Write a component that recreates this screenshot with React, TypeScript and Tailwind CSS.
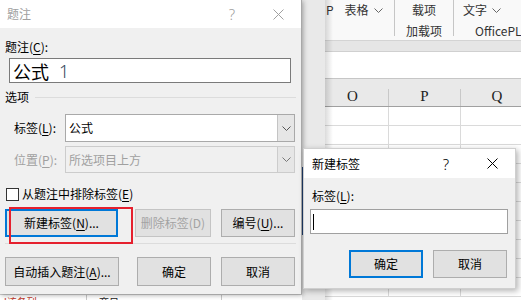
import React from "react";

const font = "font-['Noto_Sans_CJK_SC','Noto_Sans',sans-serif]";

function Chevron() {
  return (
    <svg width="9" height="5" viewBox="0 0 9 5">
      <path d="M0.5 0.5 L4.5 4.5 L8.5 0.5" fill="none" stroke="currentColor" strokeWidth="1" />
    </svg>
  );
}

function XIcon() {
  return (
    <svg width="11" height="11" viewBox="0 0 11 11">
      <path d="M0.5 0.5 L10.5 10.5 M10.5 0.5 L0.5 10.5" fill="none" stroke="currentColor" strokeWidth="1" />
    </svg>
  );
}

function Btn({
  className,
  children,
  focus,
  disabled,
}: {
  className: string;
  children: React.ReactNode;
  focus?: boolean;
  disabled?: boolean;
}) {
  const border = focus
    ? "border-2 border-[#0078d7]"
    : disabled
    ? "border border-[#c4c4c4]"
    : "border border-[#adadad]";
  const text = disabled ? "text-[#a3a3a3]" : "text-black";
  return (
    <div className={`${className} shrink-0 h-full bg-[#e1e1e1] ${border} ${text} flex items-center justify-center`}>
      <span>{children}</span>
    </div>
  );
}

function U({ children }: { children: React.ReactNode }) {
  return <span className="underline underline-offset-2">{children}</span>;
}

export default function App() {
  return (
    <div className={`relative w-[521px] h-[300px] overflow-hidden text-[12px] leading-[16px] ${font}`}>
      {/* Background: Excel window */}
      <div className="flex w-[521px] h-[300px]">
        <div className="w-[302px] shrink-0 bg-white flex flex-col justify-end">
          <div className="h-[6px] overflow-hidden flex border-t border-[#d0d0d0]">
            <div className="w-[87px] shrink-0 border-r border-[#c8c8c8] pl-[4px] pt-[1px] leading-[12px] text-[10px] text-[#c0392b]">l该各列m</div>
            <div className="w-[135px] shrink-0 border-r border-[#c8c8c8] pl-[12px] pt-[1px] leading-[12px] text-[10px] text-[#222]">商日</div>
            <div className="flex-1" />
          </div>
        </div>
        <div className="w-[23px] shrink-0 bg-[#e9e9e9] relative">
          <div className="absolute left-0 top-[167px] w-[2px] h-[68px] bg-[#24457a]" />
        </div>
        <div className="flex-1 min-w-0 overflow-hidden flex flex-col relative bg-white">
          {/* Ribbon */}
          <div className="h-[41px] shrink-0 bg-[#f9f9f9] border-b border-[#d4d4d4] flex text-[#333]">
            <div className="w-[69px] shrink-0 flex items-start pt-[2px]">
              <span className="pl-[1px]">P</span>
              <span className="ml-[11px]">表格</span>
              <span className="ml-[5px] mt-[6px] text-[#666]">
                <Chevron />
              </span>
            </div>
            <div className="w-px shrink-0 h-[36px] bg-[#c6c6c6]" />
            <div className="w-[58px] shrink-0 flex flex-col items-center pt-[2px]">
              <span>载项</span>
              <span className="mt-[5px]">加载项</span>
            </div>
            <div className="w-px shrink-0 h-[36px] bg-[#c6c6c6]" />
            <div className="flex-1 min-w-0 flex flex-col pt-[2px]">
              <div className="flex items-start pl-[9px]">
                <span>文字</span>
                <span className="ml-[5px] mt-[6px] text-[#666]">
                  <Chevron />
                </span>
              </div>
              <span className="mt-[5px] pl-[21px] whitespace-nowrap">OfficePLUS</span>
            </div>
          </div>
          <div className="h-[11px] shrink-0 bg-[#e6e6e6] border-b border-[#d0d0d0]" />
          <div className="h-[27px] shrink-0 bg-white border-b border-[#c6c6c6]" />
          {/* Column header */}
          <div className="h-[28px] shrink-0 bg-[#e9e9e9] border-b border-[#a0a0a0] flex font-['Liberation_Serif',serif] text-[15px] text-[#222]">
            <div className="w-[64px] shrink-0 flex items-end justify-center pr-[8px] pb-[2px] border-r border-[#c8c8c8] mt-[10px]">O</div>
            <div className="w-[72px] shrink-0 flex items-end justify-center pb-[2px] border-r border-[#c8c8c8] mt-[10px]">P</div>
            <div className="w-[72px] shrink-0 flex items-end justify-center pb-[2px] mt-[10px]">Q</div>
          </div>
          {/* Rows */}
          <div className="flex-1 flex flex-col">
            {[0, 1, 2, 3, 4, 5, 6, 7, 8, 9].map((r) => (
              <div key={r} className="h-[19px] shrink-0 flex border-b border-[#dadada]">
                <div className="w-[64px] shrink-0 border-r border-[#dadada]" />
                <div className="w-[72px] shrink-0 border-r border-[#dadada]" />
                <div className="w-[72px] shrink-0" />
              </div>
            ))}
          </div>
          <div className="absolute left-0 top-0 h-full w-[8px] bg-gradient-to-r from-[rgba(0,0,0,0.14)] to-transparent" />
        </div>
      </div>

      {/* Main dialog: 题注 */}
      <div className="absolute left-0 top-0 w-[302px] h-[294px] flex flex-col bg-[#f0f0f0] border-r border-[#a8a8a8] shadow-[1px_1px_5px_rgba(0,0,0,0.35)]">
        <div className="h-[28px] shrink-0 bg-white flex items-center">
          <span className="pl-[7px] text-[#a0a0a0]">题注</span>
          <div className="ml-auto flex h-full">
            <div className="w-[46px] flex items-center justify-center text-[#a0a0a0] text-[15px] font-['Noto_Sans',sans-serif] font-light">?</div>
            <div className="w-[46px] flex items-center justify-center text-[#a0a0a0]">
              <XIcon />
            </div>
          </div>
        </div>
        <div className="flex flex-col px-[5px] text-black">
          <div className="mt-[11px]">
            题注(<U>C</U>):
          </div>
          <div className="mt-[3px] ml-[4px] w-[282px] h-[25px] bg-white border border-[#7a7a7a] flex items-center pl-[3px] text-[18px] leading-[22px]">
            <span>公式</span>
            <span className="ml-[10px] text-[#34465c] font-['Noto_Sans',sans-serif] font-light">1</span>
          </div>
          <div className="mt-[6px] flex items-center h-[16px]">
            <span>选项</span>
            <div className="ml-[6px] flex-1 h-px bg-[#dcdcdc]" />
          </div>
          <div className="mt-[9px] flex items-center">
            <span className="w-[60px] shrink-0 pl-[9px]">
              标签(<U>L</U>):
            </span>
            <div className="w-[230px] h-[28px] bg-white border border-[#a9a9a9] flex">
              <span className="flex-1 flex items-center pl-[3px]">公式</span>
              <div className="w-[17px] bg-[#e6e6e6] border-l border-[#c4c4c4] flex items-center justify-center text-[#555]">
                <Chevron />
              </div>
            </div>
          </div>
          <div className="mt-[4px] flex items-center text-[#a0a0a0]">
            <span className="w-[60px] shrink-0 pl-[9px]">
              位置(<U>P</U>):
            </span>
            <div className="w-[230px] h-[27px] bg-[#f0f0f0] border border-[#cccccc] flex">
              <span className="flex-1 flex items-center pl-[3px]">所选项目上方</span>
              <div className="w-[17px] bg-[#e6e6e6] border-l border-[#cccccc] flex items-center justify-center text-[#777]">
                <Chevron />
              </div>
            </div>
          </div>
          <div className="mt-[13px] flex items-center">
            <div className="ml-[1px] w-[13px] h-[13px] bg-white border border-[#333]" />
            <span className="ml-[3px]">
              从题注中排除标签(<U>E</U>)
            </span>
          </div>
          <div className="mt-[7px] flex h-[28px]">
            <Btn className="w-[113px]" focus>
              新建标签(<U>N</U>)...
            </Btn>
            <Btn className="ml-[17px] w-[76px]" disabled>
              删除标签(D)
            </Btn>
            <Btn className="ml-[10px] w-[74px]">
              编号(<U>U</U>)...
            </Btn>
          </div>
          <div className="mt-[6px] h-px bg-[#dcdcdc]" />
          <div className="mt-[13px] flex h-[29px]">
            <Btn className="w-[114px]">
              自动插入题注(<U>A</U>)...
            </Btn>
            <Btn className="ml-[18px] w-[74px]">确定</Btn>
            <Btn className="ml-[10px] w-[74px]">取消</Btn>
          </div>
        </div>
        {/* red annotation */}
        <div className="absolute left-[9px] top-[207px] w-[124px] h-[37px] border-2 border-[#e5202e]" />
      </div>

      {/* Small dialog: 新建标签 */}
      <div className="absolute left-[303px] top-[148px] w-[213px] h-[141px] flex flex-col bg-[#f0f0f0] border border-[#cfcfcf] shadow-[2px_2px_6px_rgba(0,0,0,0.3)]">
        <div className="h-[29px] shrink-0 bg-white flex items-center">
          <span className="pl-[8px] text-black">新建标签</span>
          <div className="ml-auto flex h-full">
            <div className="w-[46px] flex items-center justify-center text-black text-[15px] font-['Noto_Sans',sans-serif] font-light">?</div>
            <div className="w-[46px] flex items-center justify-center text-black">
              <XIcon />
            </div>
          </div>
        </div>
        <div className="flex flex-col text-black">
          <div className="mt-[10px] pl-[8px]">
            标签(<U>L</U>):
          </div>
          <div className="mt-[5px] ml-[6px] w-[198px] h-[25px] bg-white border border-[#a0a0a0] flex items-center pl-[2px]">
            <div className="w-px h-[16px] bg-black" />
          </div>
          <div className="mt-[16px] flex h-[28px]">
            <Btn className="ml-[45px] w-[74px]" focus>
              确定
            </Btn>
            <Btn className="ml-[10px] w-[74px]">取消</Btn>
          </div>
        </div>
      </div>
    </div>
  );
}
